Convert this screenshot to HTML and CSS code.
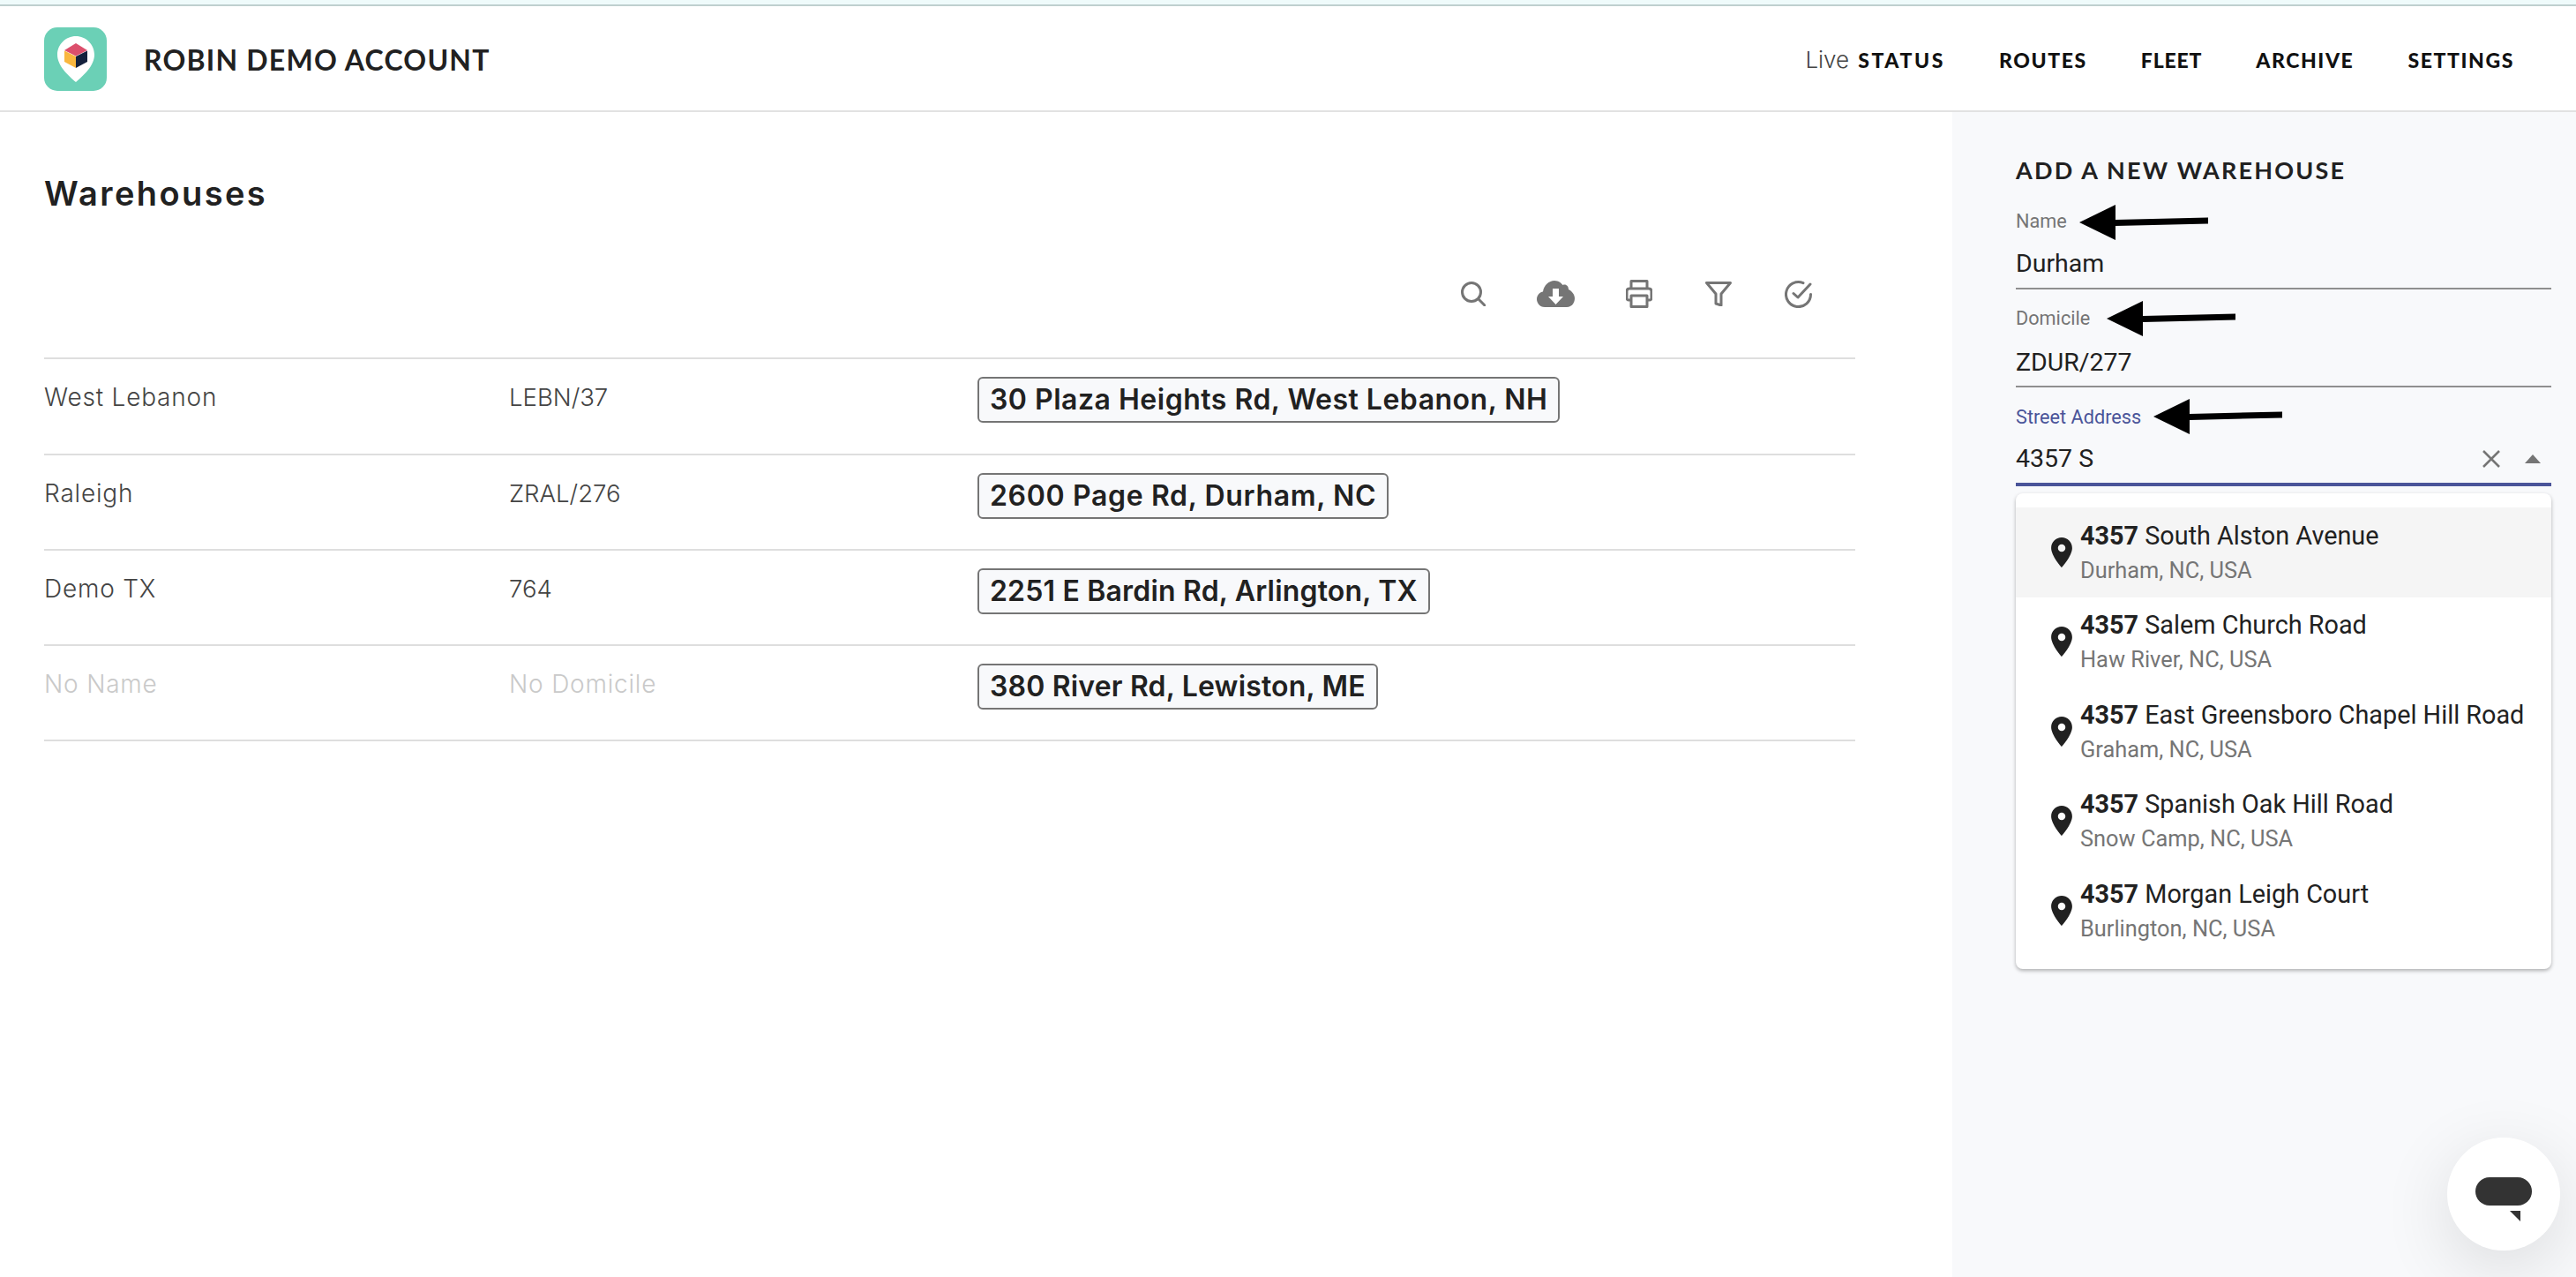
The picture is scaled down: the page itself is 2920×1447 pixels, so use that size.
FILE: index.html
```html
<!DOCTYPE html>
<html lang="en">
<head>
<meta charset="utf-8">
<title>Warehouses</title>
<link rel="stylesheet" href="styles.css">
</head>
<body>
<div class="topstripe"></div>
<header class="nav">
  <div class="logo">
    <svg viewBox="0 0 71 72" width="71" height="72">
      <rect width="71" height="72" rx="15" fill="#6bd0b6"/>
      <path d="M36 10C24.500 10 15 19.500 15 31C15 44 28 55 36 62C44 55 57 44 57 31C57 19.500 47.500 10 36 10Z" fill="#fff"/>
      <path d="M36 18L49 26L36 32.500L23 26Z" fill="#dc4f6c"/>
      <path d="M23 26.500L36 33V46L23 39Z" fill="#f9b73f"/>
      <path d="M49 26.500L36 33V46L49 39Z" fill="#14213d"/>
    </svg>
  </div>
  <div class="brand">ROBIN DEMO ACCOUNT</div>
  <nav class="menu">
    <a class="item wide"><span class="live">Live</span> STATUS</a>
    <a class="item">ROUTES</a>
    <a class="item tight">FLEET</a>
    <a class="item">ARCHIVE</a>
    <a class="item">SETTINGS</a>
  </nav>
</header>
<div class="layout">
  <main class="content">
    <h1 class="title">Warehouses</h1>
    <div class="toolbar">
      <svg class="tool" viewBox="0 0 28 28" width="28" height="28"><circle cx="12" cy="12" r="10.500"/><path d="M20 20L27 27"/></svg>
      <svg class="tool solid" viewBox="0 0 43 30" width="43" height="30"><path d="M9 30C3 30 0 25 0 21C0 16 4 13 7 12.500C8 5 14 0 20 0C25 0 28 3 29.500 5C33 3.500 36 6 36 10C40 12 43 16 43 20C43 26 39 30 34 30Z"/><path class="cut" d="M18 9H25V18H30L21.500 27L13 18H18Z"/></svg>
      <svg class="tool" viewBox="0 0 30 32" width="30" height="32"><path d="M6 10V1.500H24V10M6 23H3C2 23 1 22 1 21V13C1 11 2 10 4 10H26C28 10 29 11 29 13V21C29 22 28 23 27 23H24M6 18H24V30.500H6Z"/></svg>
      <svg class="tool nudge" viewBox="0 0 30 28" width="30" height="28"><path d="M1.500 1.500H28.500L18 14V27L12 25V14Z"/></svg>
      <svg class="tool nudge" viewBox="0 0 31 31" width="31" height="31"><path d="M29.500 15.500A14 14 0 1 1 21 2.700M10 14.500L15 19L29 4"/></svg>
    </div>
    <section class="table">
      <div class="row">
        <div class="cell name">West Lebanon</div>
        <div class="cell code">LEBN/37</div>
        <div class="addr">30 Plaza Heights Rd, West Lebanon, NH</div>
      </div>
      <div class="row">
        <div class="cell name">Raleigh</div>
        <div class="cell code">ZRAL/276</div>
        <div class="addr loose">2600 Page Rd, Durham, NC</div>
      </div>
      <div class="row">
        <div class="cell name">Demo TX</div>
        <div class="cell code">764</div>
        <div class="addr snug">2251 E Bardin Rd, Arlington, TX</div>
      </div>
      <div class="row">
        <div class="cell name muted">No Name</div>
        <div class="cell name muted">No Domicile</div>
        <div class="addr snug">380 River Rd, Lewiston, ME</div>
      </div>
    </section>
  </main>
  <aside class="side">
    <h2 class="side-title">ADD A NEW WAREHOUSE</h2>
    <div class="field f1">
      <label class="flabel">Name</label>
      <svg class="arrow" viewBox="0 0 146 40" width="146" height="40"><path d="M0 20L41 0V17L146 14.500V21.500L41 24V40Z"/></svg>
      <div class="fvalue">Durham</div>
    </div>
    <div class="field f2">
      <label class="flabel">Domicile</label>
      <svg class="arrow" viewBox="0 0 146 40" width="146" height="40"><path d="M0 20L41 0V17L146 14.500V21.500L41 24V40Z"/></svg>
      <div class="fvalue">ZDUR/277</div>
    </div>
    <div class="field f3">
      <label class="flabel">Street Address</label>
      <svg class="arrow" viewBox="0 0 146 40" width="146" height="40"><path d="M0 20L41 0V17L146 14.500V21.500L41 24V40Z"/></svg>
      <div class="fvalue">
        <span class="grow">4357 S</span>
        <svg class="clear" viewBox="0 0 20 20" width="20" height="20"><path d="M1 1L19 19M19 1L1 19"/></svg>
        <svg class="caret" viewBox="0 0 18 10" width="18" height="10"><path d="M9 0L18 10H0Z"/></svg>
      </div>
    </div>
    <div class="dropdown">
      <div class="option active">
        <svg class="pin" viewBox="5 2 14 20" width="24" height="34"><path d="M12 2C8.130 2 5 5.130 5 9c0 5.250 7 13 7 13s7-7.750 7-13c0-3.870-3.130-7-7-7zm0 9.500c-1.380 0-2.500-1.120-2.500-2.500s1.120-2.500 2.500-2.500 2.500 1.120 2.500 2.500-1.120 2.500-2.500 2.500z"/></svg>
        <div class="otext"><div class="omain"><b>4357</b> South Alston Avenue</div><div class="osub">Durham, NC, USA</div></div>
      </div>
      <div class="option">
        <svg class="pin" viewBox="5 2 14 20" width="24" height="34"><path d="M12 2C8.130 2 5 5.130 5 9c0 5.250 7 13 7 13s7-7.750 7-13c0-3.870-3.130-7-7-7zm0 9.500c-1.380 0-2.500-1.120-2.500-2.500s1.120-2.500 2.500-2.500 2.500 1.120 2.500 2.500-1.120 2.500-2.500 2.500z"/></svg>
        <div class="otext"><div class="omain"><b>4357</b> Salem Church Road</div><div class="osub">Haw River, NC, USA</div></div>
      </div>
      <div class="option">
        <svg class="pin" viewBox="5 2 14 20" width="24" height="34"><path d="M12 2C8.130 2 5 5.130 5 9c0 5.250 7 13 7 13s7-7.750 7-13c0-3.870-3.130-7-7-7zm0 9.500c-1.380 0-2.500-1.120-2.500-2.500s1.120-2.500 2.500-2.500 2.500 1.120 2.500 2.500-1.120 2.500-2.500 2.500z"/></svg>
        <div class="otext"><div class="omain"><b>4357</b> East Greensboro Chapel Hill Road</div><div class="osub">Graham, NC, USA</div></div>
      </div>
      <div class="option">
        <svg class="pin" viewBox="5 2 14 20" width="24" height="34"><path d="M12 2C8.130 2 5 5.130 5 9c0 5.250 7 13 7 13s7-7.750 7-13c0-3.870-3.130-7-7-7zm0 9.500c-1.380 0-2.500-1.120-2.500-2.500s1.120-2.500 2.500-2.500 2.500 1.120 2.500 2.500-1.120 2.500-2.500 2.500z"/></svg>
        <div class="otext"><div class="omain"><b>4357</b> Spanish Oak Hill Road</div><div class="osub">Snow Camp, NC, USA</div></div>
      </div>
      <div class="option">
        <svg class="pin" viewBox="5 2 14 20" width="24" height="34"><path d="M12 2C8.130 2 5 5.130 5 9c0 5.250 7 13 7 13s7-7.750 7-13c0-3.870-3.130-7-7-7zm0 9.500c-1.380 0-2.500-1.120-2.500-2.500s1.120-2.500 2.500-2.500 2.500 1.120 2.500 2.500-1.120 2.500-2.500 2.500z"/></svg>
        <div class="otext"><div class="omain"><b>4357</b> Morgan Leigh Court</div><div class="osub">Burlington, NC, USA</div></div>
      </div>
    </div>
  </aside>
</div>
<button class="chat" type="button" aria-label="Chat">
  <svg viewBox="0 0 64 50" width="64" height="50"><rect width="64" height="32" rx="16"/><path d="M39 38H51V50Z"/></svg>
</button>
</body>
</html>
```

FILE: styles.css
```css
* { box-sizing: border-box; }
html, body { margin: 0; height: 100%; }
body {
  display: flex;
  flex-direction: column;
  height: 1447px;
  overflow: hidden;
  background: #fff;
  color: #212121;
  font-family: "Inter", "Liberation Sans", sans-serif;
}
.topstripe {
  height: 7px;
  background: #effbfb;
  border-bottom: 2px solid #bfd0cf;
}
.nav {
  display: flex;
  align-items: center;
  height: 120px;
  padding: 2px 70px 0 50px;
  border-bottom: 2px solid #e2e2e2;
}
.logo { display: flex; }
.brand {
  margin-left: 42px;
  font-family: "Lato", sans-serif;
  font-weight: 700;
  font-size: 32px;
  letter-spacing: 1.200px;
  color: #212121;
}
.menu { display: flex; margin-left: auto; gap: 61px; align-items: baseline; }
.item {
  font-family: "Lato", sans-serif;
  font-weight: 900;
  font-size: 23px;
  letter-spacing: 1.600px;
  color: #111;
}
.item.wide { letter-spacing: 2.600px; }
.item.tight { letter-spacing: 0.800px; }
.live { font-family: "Inter", sans-serif; font-weight: 300; font-size: 26px; letter-spacing: 0; color: #444; margin-right: 2px; }
.layout { display: flex; flex: 1; min-height: 0; }
.content { flex: 1; padding: 0 110px 0 50px; }
.title {
  margin: 68px 0 0;
  font-size: 38px;
  line-height: 48px;
  font-weight: 600;
  letter-spacing: 2.400px;
  color: #212121;
}
.toolbar {
  display: flex;
  justify-content: flex-end;
  align-items: center;
  gap: 58px;
  height: 40px;
  margin-top: 70px;
  padding-right: 49px;
}
.tool { fill: none; stroke: #757575; stroke-width: 3; stroke-linejoin: round; stroke-linecap: round; }
.tool.nudge { margin-left: 2px; }
.tool.solid { fill: #757575; stroke: none; }
.tool .cut { fill: #fff; }
.table { margin-top: 52px; }
.row {
  display: grid;
  grid-template-columns: 527px 531px 1fr;
  height: 108px;
  padding-top: 20px;
  border-top: 2px solid #dedede;
}
.row:first-child { height: 109px; }
.row:last-child { border-bottom: 2px solid #dedede; height: 110px; }
.cell {
  font-size: 28px;
  line-height: 46px;
  font-weight: 300;
  color: #444;
}
.cell.name { letter-spacing: 0.800px; }
.cell.code { font-size: 27.500px; letter-spacing: 0; }
.cell.muted { color: #c9c9c9; }
.addr {
  justify-self: start;
  height: 52px;
  padding: 0 12px;
  border: 2px solid #757575;
  border-radius: 6px;
  background: #f8f9fb;
  font-size: 32px;
  line-height: 47px;
  font-weight: 600;
  letter-spacing: 0.500px;
  color: #212121;
  white-space: nowrap;
}
.addr.loose { letter-spacing: 0.650px; }
.addr.snug { letter-spacing: 0.180px; }
.side {
  width: 707px;
  padding: 50px 28px 0 72px;
  background: #f8f9fb;
}
.side-title {
  margin: 0;
  font-family: "Lato", sans-serif;
  font-size: 27px;
  line-height: 32px;
  font-weight: 700;
  letter-spacing: 2.200px;
  color: #212121;
}
.field {
  position: relative;
  border-bottom: 2px solid #8f8f8f;
}
.f1 { height: 119px; padding-top: 28px; }
.f2 { height: 111px; padding-top: 19px; }
.f3 { height: 112px; padding-top: 20px; border-bottom: 4px solid #4a5499; }
.flabel { display: block; font-family: "Roboto", sans-serif; font-size: 21.700px; line-height: 28px; color: #757575; }
.f3 .flabel { color: #4a5499; }
.fvalue { display: flex; align-items: center; font-family: "Roboto", sans-serif; font-size: 28.500px; line-height: 36px; color: #212121; }
.f1 .fvalue { margin-top: 16px; }
.f2 .fvalue { margin-top: 18px; }
.f3 .fvalue { margin-top: 15px; }
.grow { flex: 1; }
.arrow { position: absolute; fill: #000; }
.f1 .arrow { left: 72px; top: 23px; }
.f2 .arrow { left: 103px; top: 13px; }
.f3 .arrow { left: 156px; top: 13px; }
.clear { fill: none; stroke: #757575; stroke-width: 2.500; margin-right: 28px; }
.caret { fill: #757575; margin-right: 12px; }
.dropdown {
  margin-top: 8px;
  padding: 16px 0 15px;
  background: #fff;
  border-radius: 8px;
  box-shadow: 0 2px 4px rgba(0, 0, 0, 0.3);
}
.option { display: flex; align-items: center; gap: 9px; height: 101.500px; padding-left: 40px; }
.option.active { background: #f5f5f5; }
.pin { fill: #212121; flex: none; }
.otext { font-family: "Roboto", sans-serif; }
.omain { font-size: 28.800px; line-height: 40px; color: #212121; }
.omain b { font-weight: 700; }
.osub { font-size: 25.400px; line-height: 38px; color: #757575; }
.chat {
  position: fixed;
  left: 2774px;
  top: 1289px;
  display: flex;
  align-items: center;
  justify-content: center;
  width: 128px;
  height: 128px;
  padding: 12px 0 0;
  border: 0;
  border-radius: 50%;
  background: #fff;
  box-shadow: 0 20px 80px rgba(0, 0, 0, 0.12);
}
.chat svg { fill: #333; }
```
